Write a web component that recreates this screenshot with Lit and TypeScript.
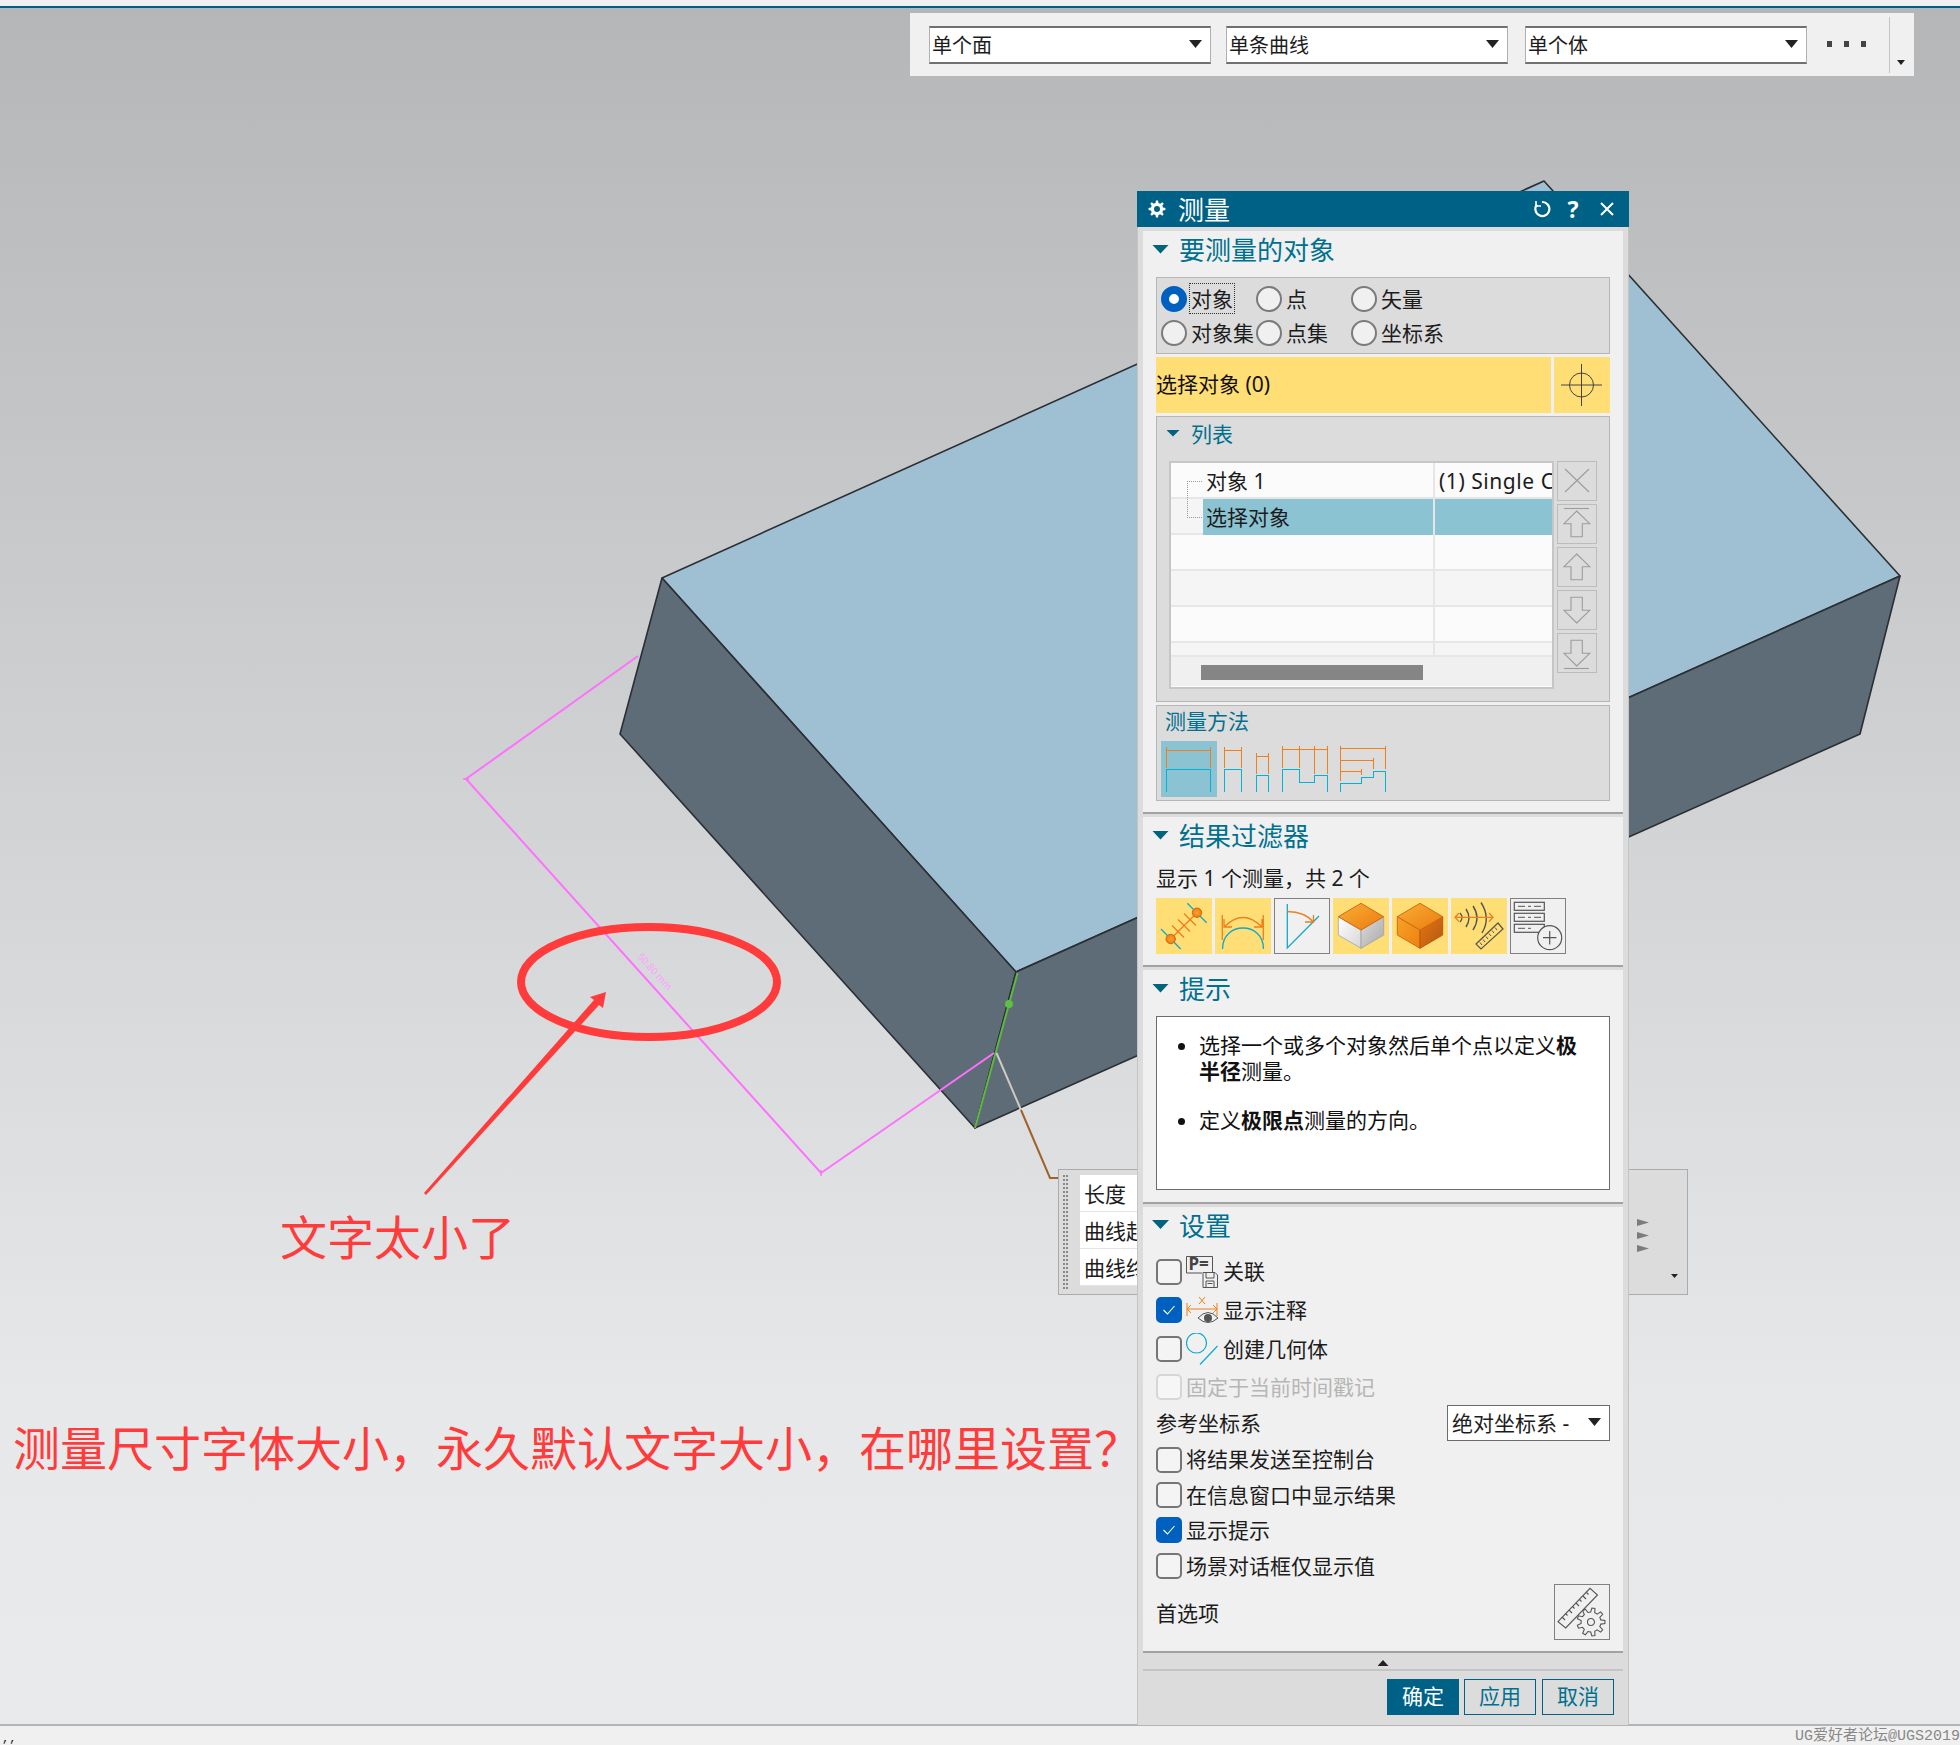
import { LitElement, html, css, svg } from "lit";
import { customElement } from "lit/decorators.js";

const ORANGE = "#ee7f1a";
const BLUE = "#0fa9cf";

// 歯車のパスを作る
function gearPath(cx: number, cy: number, rOut: number, rIn: number, teeth: number, hole: number) {
  const pts: string[] = [];
  const step = (Math.PI * 2) / teeth;
  for (let i = 0; i < teeth; i++) {
    const a = i * step;
    [
      [a - step * 0.3, rIn],
      [a - step * 0.16, rOut],
      [a + step * 0.16, rOut],
      [a + step * 0.3, rIn],
    ].forEach(([t, r]) => pts.push(`${(cx + Math.cos(t) * r).toFixed(2)} ${(cy + Math.sin(t) * r).toFixed(2)}`));
  }
  const ring = `M${cx - hole} ${cy}a${hole} ${hole} 0 1 0 ${hole * 2} 0a${hole} ${hole} 0 1 0 ${-hole * 2} 0Z`;
  return `M${pts.join("L")}Z${ring}`;
}

const arrowUp = "M19.7 7 32.7 19.7H25.3V32.7H14V19.7H7Z";
const arrowDown = "M19.7 33 32.7 20.3H25.3V7.3H14V20.3H7Z";

const sideButtons = [
  svg`<path d="M8 8 32 31M32 8 8 31"/>`,
  svg`<path d="M7 4.5H32"/><path d=${arrowUp}/>`,
  svg`<path d=${arrowUp}/>`,
  svg`<path d=${arrowDown}/>`,
  svg`<path d=${arrowDown}/><path d="M7 35.5H32"/>`,
];

const resultIcons = [
  { on: true, art: svg`
    <path d="M5 31 24.7 51M31.3 5.3 50.7 24.7" stroke=${BLUE} stroke-width="1.3" fill="none"/>
    <path d="M14.7 41 41 14.7M16 27.5 28 39.5M22 21.5 34 33.5M28 15.5 40 27.5" stroke=${ORANGE} stroke-width="1.3" fill="none"/>
    <circle cx="14.7" cy="41" r="4.7" fill="url(#ball)" stroke="#d06a10"/>
    <circle cx="41" cy="14.7" r="4.7" fill="url(#ball)" stroke="#d06a10"/>` },
  { on: true, art: svg`
    <path d="M7.3 17V42M48.3 17V42M9 29Q28 10 47 29M9 21V29H17M47 21V29H39" stroke=${ORANGE} stroke-width="1.3" fill="none"/>
    <path d="M7.5 51C7.5 23 48.5 23 48.5 51" stroke=${BLUE} stroke-width="1.3" fill="none"/>` },
  { on: false, art: svg`
    <path d="M13.3 6V50L45 18" stroke=${BLUE} stroke-width="1.3" fill="none"/>
    <path d="M13.3 13.5Q31 14 39.5 24M39.5 17V24H31" stroke=${ORANGE} stroke-width="1.3" fill="none"/>` },
  { on: true, art: svg`
    <path d="M5.3 18.7 28 32V50.3L5.3 37Z" fill="url(#wl)" stroke="#b0b0b0"/>
    <path d="M50.7 18.7 28 32V50.3L50.7 37Z" fill="url(#wr)" stroke="#a8a8a8"/>
    <path d="M5.3 18.7 28 5.3 50.7 18.7 28 32Z" fill="url(#ot)" stroke="#cf6a12"/>` },
  { on: true, art: svg`
    <path d="M5.3 18.7 28 32V50.3L5.3 37Z" fill="url(#ol)" stroke="#cf6a12"/>
    <path d="M50.7 18.7 28 32V50.3L50.7 37Z" fill="url(#or)" stroke="#b85a12"/>
    <path d="M5.3 18.7 28 5.3 50.7 18.7 28 32Z" fill="url(#ot)" stroke="#cf6a12"/>` },
  { on: true, art: svg`
    <path d="M9 15Q13 19.500 9 24M15 11Q21 20 15 29M22 8Q30 20 22 32M30 4.500Q40 20 31 35" stroke="#555" stroke-width="1.4" fill="none"/>
    <path d="M4 19.3H42M8 15 4 19.3 8 23.6M38 15 42 19.3 38 23.6" stroke=${ORANGE} stroke-width="1.3" fill="none"/>
    <path d="M25 46 47 25 52 31 30 51Z" fill="#ffde76" stroke="#555" stroke-width="1.2"/>
    <path d="M29 44.5 31 47M32 41.5 34 44M35 38.5 37 41M38 35.5 40 38M41 32.5 43 35M44 29.5 46 32" stroke="#555" stroke-width="1"/>` },
  { on: false, art: svg`
    <g fill="none" stroke="#555" stroke-width="1.2">
      <rect x="4.3" y="4.3" width="30" height="8"/>
      <rect x="4.3" y="15.3" width="30" height="8"/>
      <rect x="4.3" y="26.3" width="30" height="8"/>
      <path d="M8 8.3H15M18 8.3H21M24 8.3H31M8 19.3H15M18 19.3H21M24 19.3H31M8 30.3H15M18 30.3H21" stroke-width="1"/>
    </g>
    <circle cx="39.7" cy="39.7" r="12" fill="#f0f0f0" stroke="#555" stroke-width="1.2"/>
    <path d="M39.7 33V46.4M33 39.7H46.4" stroke="#555" stroke-width="1.2"/>` },
];

const tableRows = [
  { name: "对象 1", value: "(1) Single C", sel: false },
  { name: "选择对象", value: "", sel: true },
  { name: "", value: "", sel: false },
  { name: "", value: "", sel: false },
  { name: "", value: "", sel: false },
];

@customElement("app-root")
export class AppRoot extends LitElement {
  static styles = css`
    :host {
      display: block;
      font-family: "Noto Sans", "Noto Sans CJK SC", sans-serif;
      font-size: 21px;
      color: #1c1c1c;
    }
    * {
      box-sizing: border-box;
    }
    svg {
      display: block;
    }

    /* ページ全体 */
    .page {
      position: relative;
      width: 1960px;
      height: 1745px;
      overflow: hidden;
      display: flex;
      flex-direction: column;
    }
    .strip {
      height: 8px;
      background: #f0f0f0;
      border-bottom: 2px solid #005f87;
    }
    .viewport {
      flex: 1;
      background: linear-gradient(#b5b6b8 0, #e7e8ea 1400px, #e9eaec 100%);
    }
    .status {
      height: 21px;
      background: #f0f0f0;
      border-top: 2px solid #b4b4b4;
      display: flex;
      justify-content: space-between;
      align-items: center;
      padding: 0 0 4px 2px;
      font-family: "Liberation Mono", "Noto Sans CJK SC", monospace;
      font-size: 15px;
      color: #888;
      white-space: nowrap;
    }
    .tick {
      color: #222;
      font-size: 12px;
      line-height: 1;
      align-self: flex-end;
      margin-bottom: -4px;
    }
    .scene {
      position: absolute;
      inset: 0;
    }
    .scene text {
      font-family: "Noto Sans CJK SC", sans-serif;
    }

    /* 上のツールバー */
    .toolbar {
      position: absolute;
      left: 910px;
      top: 13px;
      width: 1004px;
      height: 63px;
      background: #f0f0f0;
      display: flex;
      align-items: flex-start;
      padding: 13px 0 0 19px;
      gap: 15px;
      font-size: 20px;
    }
    .combo {
      width: 282px;
      height: 38px;
      background: #fff;
      border: 1px solid #b0b0b0;
      border-top: 2px solid #707070;
      border-bottom: 2px solid #707070;
      display: flex;
      align-items: center;
      justify-content: space-between;
      padding: 0 8px 2px 2px;
    }
    .combo:nth-child(3) {
      margin-left: 2px;
    }
    .caret {
      width: 13px;
      height: 8px;
      background: #222;
      clip-path: polygon(0 0, 100% 0, 50% 100%);
    }
    .dots {
      display: flex;
      gap: 12px;
      margin: 15px 0 0 5px;
    }
    .dots span {
      width: 5px;
      height: 6px;
      background: #444;
    }
    .tool-end {
      position: relative;
      width: 1px;
      height: 56px;
      margin: -9px 0 0 8px;
      background: #c4c4c4;
    }
    .tool-end::after {
      content: "";
      position: absolute;
      left: 8px;
      top: 43px;
      width: 8px;
      height: 5px;
      background: #222;
      clip-path: polygon(0 0, 100% 0, 50% 100%);
    }

    /* 注釈の小窓 */
    .readout {
      position: absolute;
      left: 1058px;
      top: 1169px;
      width: 630px;
      height: 126px;
      background: #dcdcdc;
      border: 1px solid #ababab;
      display: flex;
      padding: 5px 0 0 4px;
    }
    .grip {
      width: 5px;
      height: 114px;
      border-left: 2px dotted #888;
      border-right: 2px dotted #888;
    }
    .readout-rows {
      width: 490px;
      height: 110px;
      margin-left: 12px;
      background: #fff;
    }
    .readout-rows div {
      height: 37px;
      line-height: 38px;
      padding-left: 4px;
      border-bottom: 1px solid #e4e4e4;
    }
    .readout-tail {
      margin-left: 67px;
      flex: 1;
      padding-top: 44px;
      display: flex;
      flex-direction: column;
      gap: 6px;
    }
    .readout-tail span {
      width: 12px;
      height: 7px;
      background: #7c7c7c;
      clip-path: polygon(0 0, 100% 50%, 0 100%);
    }
    .readout-tail span.down {
      width: 7px;
      height: 4px;
      margin: 16px 0 0 34px;
      background: #222;
      clip-path: polygon(0 0, 100% 0, 50% 100%);
    }

    /* ダイアログ */
    .dialog {
      position: absolute;
      left: 1137px;
      top: 191px;
      width: 492px;
      background: #dcdcdc;
      border-left: 1px solid #c4c4c4;
      border-right: 1px solid #c4c4c4;
    }
    .title {
      height: 36px;
      margin: 0 -1px;
      background: #006187;
      color: #fff;
      display: flex;
      align-items: center;
      font-size: 26px;
      padding: 0 5px 0 11px;
    }
    .title .name {
      margin-left: 12px;
      flex: 1;
    }
    .title-btn {
      width: 34px;
      display: flex;
      justify-content: center;
      font-size: 23px;
      font-weight: 700;
      line-height: 1;
    }
    .title-btn.reset {
      margin: 0 -3px 0 3px;
    }
    .panels {
      padding: 4px 5px 0;
      display: flex;
      flex-direction: column;
      gap: 3px;
    }
    .panel {
      background: #f0f0f0;
      border-bottom: 2px solid #a2a2a2;
      padding: 0 13px;
    }
    .panel.p1 {
      height: 583px;
    }
    .panel.p2 {
      height: 150px;
    }
    .panel.p3 {
      height: 234px;
    }
    .panel.p4 {
      height: 446px;
    }
    .head {
      height: 46px;
      display: flex;
      align-items: center;
      color: #00708f;
      font-size: 26px;
      margin-left: -4px;
      gap: 10px;
      padding-bottom: 10px;
    }
    .p4 .head {
      height: 45px;
    }
    .fold {
      width: 17px;
      height: 9px;
      background: #00647f;
      clip-path: polygon(0 0, 100% 0, 50% 100%);
    }
    .group {
      background: #dcdcdc;
      border: 1px solid #b6b6b6;
    }
    .radios {
      height: 77px;
      padding: 8px 0 0 4px;
      display: grid;
      grid-template-columns: 95px 95px 95px;
      grid-auto-rows: 26px;
      row-gap: 8px;
    }
    .radio {
      display: flex;
      align-items: center;
      gap: 4px;
      white-space: nowrap;
      line-height: 26px;
    }
    .dot {
      flex: none;
      width: 26px;
      height: 26px;
      border-radius: 50%;
      background: #f0f0f0;
      border: 2px solid #7b7b7b;
    }
    .dot.on {
      background: #fff;
      border: 8px solid #0060c0;
    }
    .focus {
      position: relative;
    }
    .focus::after {
      content: "";
      position: absolute;
      inset: -3px -2px -2px -2px;
      border: 1px dotted #333;
    }
    .pick {
      display: flex;
      gap: 3px;
      height: 56px;
      margin: 3px 0;
    }
    .pick-label {
      flex: 1;
      background: #ffde76;
      line-height: 55px;
      color: #111;
    }
    .pick-btn {
      width: 56px;
      background: #ffde76;
    }
    .list {
      height: 286px;
      padding-left: 12px;
    }
    .list-head {
      height: 44px;
      display: flex;
      align-items: center;
      gap: 11px;
      margin-left: -2px;
      padding-bottom: 12px;
      color: #00708f;
    }
    .list-head .fold {
      width: 14px;
      height: 7px;
      margin-left: -1px;
    }
    .list-body {
      display: flex;
      gap: 3px;
    }
    .table {
      position: relative;
      width: 385px;
      height: 228px;
      background: #fbfbfb;
      border: 2px solid #c6c6c6;
      overflow: hidden;
    }
    .row {
      display: grid;
      grid-template-columns: 32px 230px 119px;
      height: 36px;
      border-bottom: 2px solid #e6e6e6;
      line-height: 36px;
      white-space: nowrap;
    }
    .row:nth-child(even) {
      background: #f5f5f5;
    }
    .row .cell {
      padding-left: 3px;
    }
    .row .val {
      padding-left: 4px;
      border-left: 2px solid #e6e6e6;
      letter-spacing: 0.55px;
    }
    .row.sel .cell,
    .row.sel .val {
      background: #8cc3d3;
    }
    .row.stub {
      height: 14px;
      background: #f5f5f5;
    }
    .tree {
      position: absolute;
      left: 16px;
      top: 18px;
      width: 15px;
      height: 37px;
      border: 1px dotted #9a9a9a;
      border-right: 0;
    }
    .hscroll {
      height: 29px;
      background: #f0f0f0;
      padding: 8px 0 0 30px;
    }
    .hscroll div {
      width: 222px;
      height: 15px;
      background: #858585;
    }
    .side {
      display: flex;
      flex-direction: column;
      gap: 3px;
    }
    .side-btn {
      width: 40px;
      height: 40px;
      border: 1px solid #bcbcbc;
    }
    .side-btn svg {
      fill: none;
      stroke: #9c9c9c;
      stroke-width: 1.1;
      margin: -1px;
    }
    .method {
      height: 96px;
      margin-top: 3px;
      padding: 0 0 0 8px;
      color: #00708f;
      line-height: 30px;
    }
    .method-icons {
      display: flex;
      margin: 5px 0 0 -4px;
    }
    .method-on {
      background: #8cc3d3;
    }
    .method-icons svg {
      shape-rendering: crispEdges;
    }
    .note {
      line-height: 30px;
      height: 34px;
    }
    .tiles {
      display: flex;
      gap: 3px;
      margin-top: 1px;
    }
    .tile {
      width: 56px;
      height: 56px;
    }
    .tile.on {
      background: #ffde76;
    }
    .tile.off {
      border: 1px solid #808080;
    }
    .tile.off svg {
      margin: -1px;
    }
    .hint {
      height: 174px;
      background: #fff;
      border: 1px solid #6c6c6c;
    }
    .hint ul {
      margin: 0;
      padding: 15px 20px 0 42px;
      line-height: 26px;
      color: #111;
    }
    .hint li + li {
      margin-top: 23px;
    }
    .line {
      display: flex;
      align-items: center;
      white-space: nowrap;
      padding-bottom: 2px;
    }
    .h38 {
      height: 38px;
    }
    .h39 {
      height: 39px;
    }
    .h37 {
      height: 37px;
    }
    .h36 {
      height: 36px;
    }
    .h35 {
      height: 35px;
    }
    .check {
      flex: none;
      width: 26px;
      height: 26px;
      border: 2px solid #767676;
      border-radius: 5px;
      background: #f4f4f4;
      margin: 3px 4px 0 0;
    }
    .check.on {
      background: #0060c0;
      border-color: #0060c0;
    }
    .check.on svg {
      margin: 3px;
    }
    .check.off {
      border-color: #d6d6d6;
      background: #f6f6f6;
    }
    .off-text {
      color: #b6b6b6;
    }
    .line-icon {
      margin: 3px 5px 0 0;
    }
    .spread {
      justify-content: space-between;
    }
    .frame-combo {
      width: 163px;
      height: 36px;
      margin-top: 2px;
      background: #fff;
      border: 1px solid #6c6c6c;
      display: flex;
      align-items: center;
      justify-content: space-between;
      padding: 0 8px 2px 4px;
    }
    .pref-btn {
      width: 56px;
      height: 56px;
      border: 1px solid #808080;
    }
    .pref-btn svg {
      margin: -1px;
    }
    .fold-bar {
      height: 16px;
      margin: 0 5px;
      display: flex;
      justify-content: center;
      padding-top: 7px;
    }
    .fold-bar div {
      width: 11px;
      height: 6px;
      background: #222;
      clip-path: polygon(50% 0, 100% 100%, 0 100%);
    }
    .actions {
      margin: 0 5px;
      border-top: 2px solid #c4c4c4;
      padding: 8px 9px 10px 0;
      display: flex;
      justify-content: flex-end;
      gap: 6px;
    }
    .btn {
      width: 72px;
      height: 36px;
      border: 1px solid #006187;
      color: #00708f;
      text-align: center;
      line-height: 33px;
    }
    .btn.primary {
      background: #006187;
      color: #fff;
      margin-right: -1px;
    }
  `;

  // 3D モデルと赤い注釈
  private scene() {
    return html`
      <svg class="scene" width="1960" height="1745" viewBox="0 0 1960 1745">
        <g stroke="#2b2f33" stroke-width="1.6" stroke-linejoin="round">
          <path d="M662 578 1544 181 1900 576 1016 972Z" fill="#9fbfd3"/>
          <path d="M662 578 1016 972 975 1128 620 734Z" fill="#5d6c77"/>
          <path d="M1016 972 1900 576 1860 734 975 1128Z" fill="#5d6c77"/>
        </g>
        <path d="M638 656 466 779 821 1173 994 1053" fill="none" stroke="#ff70ff" stroke-width="2"/>
        <path d="M463 779H469M821 1170V1176" stroke="#ff70ff" stroke-width="1.4"/>
        <text x="637" y="957" font-size="10" fill="#ffa0ff" transform="rotate(48 637 957)">50.80 mm</text>
        <path d="M1017.5 973 975 1128" stroke="#5fb83f" stroke-width="2"/>
        <circle cx="1009" cy="1004" r="4" fill="#5cc044"/>
        <path d="M996.5 1053 1021 1110" stroke="#cfcac6" stroke-width="2"/>
        <path d="M1021 1110 1050 1178H1058" fill="none" stroke="#a0622c" stroke-width="2"/>
        <ellipse cx="649" cy="982" rx="128" ry="55" fill="none" stroke="#ff3b3b" stroke-width="8"/>
        <path d="M606 992 603 1008 599 1005 426 1195 424 1193 594 1000 590 997Z" fill="#ff3b3b"/>
        <text x="280" y="1255" font-size="47" fill="#ff3b3b">文字太小了</text>
        <text x="13" y="1466" font-size="47" fill="#ff3b3b">测量尺寸字体大小，永久默认文字大小，在哪里设置？</text>
      </svg>
    `;
  }

  private toolbar() {
    return html`
      <div class="toolbar">
        ${["单个面", "单条曲线", "单个体"].map(
          (t) => html`<div class="combo"><span>${t}</span><span class="caret"></span></div>`,
        )}
        <div class="dots"><span></span><span></span><span></span></div>
        <div class="tool-end"></div>
      </div>
    `;
  }

  private readout() {
    return html`
      <div class="readout">
        <div class="grip"></div>
        <div class="readout-rows">
          <div>长度</div>
          <div>曲线起点</div>
          <div>曲线终点</div>
        </div>
        <div class="readout-tail">
          <span></span><span></span><span></span>
          <span class="down"></span>
        </div>
      </div>
    `;
  }

  private head(title: string) {
    return html`<div class="head"><span class="fold"></span><span>${title}</span></div>`;
  }

  private radio(label: string, on = false) {
    return html`
      <div class="radio">
        <span class="dot ${on ? "on" : ""}"></span>
        <span class=${on ? "focus" : ""}>${label}</span>
      </div>
    `;
  }

  private panelTarget() {
    return html`
      <div class="panel p1">
        ${this.head("要测量的对象")}
        <div class="group radios">
          ${this.radio("对象", true)} ${this.radio("点")} ${this.radio("矢量")}
          ${this.radio("对象集")} ${this.radio("点集")} ${this.radio("坐标系")}
        </div>
        <div class="pick">
          <div class="pick-label">选择对象 (0)</div>
          <div class="pick-btn">
            <svg width="56" height="56" viewBox="0 0 56 56" fill="none" stroke="#444" stroke-width="1">
              <circle cx="27.5" cy="28" r="12"/>
              <path d="M7 28H48M27.5 7V49"/>
            </svg>
          </div>
        </div>
        <div class="group list">
          <div class="list-head"><span class="fold"></span><span>列表</span></div>
          <div class="list-body">
            <div class="table">
              ${tableRows.map(
                (r) => html`
                  <div class="row ${r.sel ? "sel" : ""}">
                    <span></span><span class="cell">${r.name}</span><span class="val">${r.value}</span>
                  </div>
                `,
              )}
              <div class="row stub"><span></span><span></span><span class="val"></span></div>
              <div class="tree"></div>
              <div class="hscroll"><div></div></div>
            </div>
            <div class="side">
              ${sideButtons.map(
                (art) => html`
                  <div class="side-btn"><svg width="40" height="40" viewBox="0 0 40 40">${art}</svg></div>
                `,
              )}
            </div>
          </div>
        </div>
        <div class="group method">
          测量方法
          <div class="method-icons">
            <div class="method-on">
              <svg width="56" height="56" viewBox="0 0 56 56" fill="none" stroke-width="1">
                <path d="M5 6V27M49.500 6V27M5 9.500H49.500" stroke=${ORANGE}/>
                <path d="M5 51V28.500H49.500V51" stroke="#00b4d8"/>
              </svg>
            </div>
            <svg width="175" height="56" viewBox="0 0 175 56" fill="none" stroke-width="1">
              <g stroke=${ORANGE}>
                <path d="M7.500 6V27M24.500 6V27M7.500 9.500H24.500"/>
                <path d="M39.500 12V33M51.500 12V33M39.500 15.500H51.500"/>
                <path d="M65.500 5V27M82.500 5V27M97.500 5V33M110.500 5V33M65.500 8.500H110.500"/>
                <path d="M123.500 5V40M123.500 7.500H168.500M168.500 5V28M123.500 19.500H156.500M156.500 17V28M123.500 30.500H144.500M144.500 28V34"/>
              </g>
              <g stroke="#00b4d8">
                <path d="M7.500 51V28.500H24.500V51"/>
                <path d="M39.500 51V34.500H51.500V51"/>
                <path d="M65.500 51V28.500H82.500V41.500H97.500V34.500H110.500V51"/>
                <path d="M123.500 51V42.500H144.500V36.500H156.500V30.500H168.500V51"/>
              </g>
            </svg>
          </div>
        </div>
      </div>
    `;
  }

  private panelFilter() {
    return html`
      <div class="panel p2">
        ${this.head("结果过滤器")}
        <div class="note">显示 1 个测量，共 2 个</div>
        <div class="tiles">
          ${resultIcons.map(
            (i) => html`
              <div class="tile ${i.on ? "on" : "off"}">
                <svg width="56" height="56" viewBox="0 0 56 56">${i.art}</svg>
              </div>
            `,
          )}
        </div>
      </div>
    `;
  }

  private panelHint() {
    return html`
      <div class="panel p3">
        ${this.head("提示")}
        <div class="hint">
          <ul>
            <li>选择一个或多个对象然后单个点以定义<b>极半径</b>测量。</li>
            <li>定义<b>极限点</b>测量的方向。</li>
          </ul>
        </div>
      </div>
    `;
  }

  private check(state: "" | "on" | "off" = "") {
    return html`
      <span class="check ${state}">
        ${state === "on"
          ? html`<svg width="16" height="16" viewBox="0 0 16 16" fill="none" stroke="#fff" stroke-width="1.1"><path d="M2.500 8 6.500 12 13.500 4"/></svg>`
          : null}
      </span>
    `;
  }

  private panelSettings() {
    return html`
      <div class="panel p4">
        ${this.head("设置")}
        <div class="line h38">
          ${this.check()}
          <svg class="line-icon" width="32" height="32" viewBox="0 0 32 32" fill="none" stroke="#555" stroke-width="1">
            <path d="M16 17H.5V.5H26.500V16"/>
            <text x="2.500" y="14" font-size="17" font-weight="700" fill="#444" stroke="none">P=</text>
            <path d="M17 16.500H29L31.500 19V31.500H17ZM20 16.500V22H28V16.500M20 31V25H28V31M21.500 27.500H26.500" fill="#f0f0f0"/>
          </svg>
          关联
        </div>
        <div class="line h39">
          ${this.check("on")}
          <svg class="line-icon" width="32" height="32" viewBox="0 0 32 32" fill="none">
            <path d="M1 9V22M31 9V22M1 15H31M5 11 1 15 5 19M27 11 31 15 27 19M13 3 19 10M19 3 13 10" stroke=${ORANGE}/>
            <path d="M12 24Q22 13 32 24Q22 33 12 24Z" fill="#f0f0f0" stroke="#555"/>
            <circle cx="22" cy="24" r="4" fill="#555"/>
          </svg>
          显示注释
        </div>
        <div class="line h39">
          ${this.check()}
          <svg class="line-icon" width="32" height="32" viewBox="0 0 32 32" fill="none" stroke=${BLUE} stroke-width="1.2">
            <circle cx="10.500" cy="10" r="10"/>
            <path d="M14 31.500 31.500 13"/>
          </svg>
          创建几何体
        </div>
        <div class="line h37 off-text">${this.check("off")}固定于当前时间戳记</div>
        <div class="line h36 spread">
          参考坐标系
          <div class="frame-combo"><span>绝对坐标系 -</span><span class="caret"></span></div>
        </div>
        <div class="line h36">${this.check()}将结果发送至控制台</div>
        <div class="line h35">${this.check()}在信息窗口中显示结果</div>
        <div class="line h35">${this.check("on")}显示提示</div>
        <div class="line h37">${this.check()}场景对话框仅显示值</div>
        <div class="line spread">
          首选项
          <div class="pref-btn">
            <svg width="56" height="56" viewBox="0 0 56 56" fill="none" stroke="#555" stroke-width="1.1">
              <path d="M4 37.700 36 4.300 43.500 11 11.700 44Z"/>
              <path d="M8 33 11 36M11.500 29.500 13.500 31.500M15 26 18 29M18.500 22.500 20.500 24.500M22 19 25 22M25.500 15.500 27.500 17.500M29 12 32 15M32.500 8.500 34.500 10.500"/>
              <path d=${gearPath(37, 38, 14, 10, 9, 3.5)} fill="#f0f0f0"/>
            </svg>
          </div>
        </div>
      </div>
    `;
  }

  private dialog() {
    return html`
      <div class="dialog">
        <div class="title">
          <svg width="18" height="18" viewBox="0 0 18 18">
            <path d=${gearPath(9, 9, 8.500, 6.200, 8, 3)} fill="#fff" fill-rule="evenodd"/>
          </svg>
          <span class="name">测量</span>
          <span class="title-btn reset">
            <svg width="20" height="20" viewBox="0 0 20 20" fill="none" stroke="#fff" stroke-width="2.200">
              <path d="M5 5.500A7 7 0 1 0 10 3"/>
              <path d="M4 2V7H9" stroke-width="1.600"/>
            </svg>
          </span>
          <span class="title-btn">?</span>
          <span class="title-btn">
            <svg width="20" height="20" viewBox="0 0 20 20" fill="none" stroke="#fff" stroke-width="2">
              <path d="M4 4 16 16M16 4 4 16"/>
            </svg>
          </span>
        </div>
        <div class="panels">
          ${this.panelTarget()} ${this.panelFilter()} ${this.panelHint()} ${this.panelSettings()}
        </div>
        <div class="fold-bar"><div></div></div>
        <div class="actions">
          <div class="btn primary">确定</div>
          <div class="btn">应用</div>
          <div class="btn">取消</div>
        </div>
      </div>
    `;
  }

  render() {
    return html`
      <svg width="0" height="0" style="position:absolute">
        <defs>
          <radialGradient id="ball"><stop offset="0" stop-color="#f9a52c"/><stop offset="1" stop-color="#ea7c12"/></radialGradient>
          <linearGradient id="ot" x1="0" y1="0" x2="1" y2="1"><stop offset="0" stop-color="#f8b035"/><stop offset="1" stop-color="#ec7a10"/></linearGradient>
          <linearGradient id="ol" x1="0" y1="0" x2="1" y2="1"><stop offset="0" stop-color="#f6a426"/><stop offset="1" stop-color="#ee7f12"/></linearGradient>
          <linearGradient id="or" x1="0" y1="0" x2="1" y2="1"><stop offset="0" stop-color="#e87510"/><stop offset="1" stop-color="#b05814"/></linearGradient>
          <linearGradient id="wl" x1="0" y1="0" x2="1" y2="1"><stop offset="0" stop-color="#fff"/><stop offset="1" stop-color="#d6d6d6"/></linearGradient>
          <linearGradient id="wr" x1="0" y1="0" x2="1" y2="1"><stop offset="0" stop-color="#dcdcdc"/><stop offset="1" stop-color="#a8a8a8"/></linearGradient>
        </defs>
      </svg>
      <div class="page">
        <div class="strip"></div>
        <div class="viewport"></div>
        <div class="status"><span class="tick">,,</span><span>UG爱好者论坛@UGS2019</span></div>
        ${this.scene()} ${this.toolbar()} ${this.readout()} ${this.dialog()}
      </div>
    `;
  }
}
